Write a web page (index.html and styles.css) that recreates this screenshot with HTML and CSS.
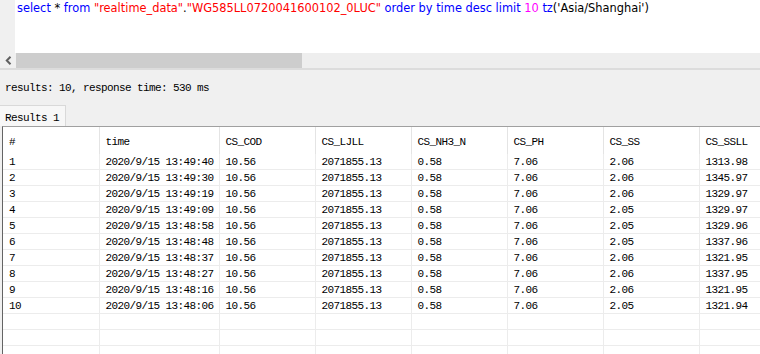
FILE: index.html
```html
<!DOCTYPE html>
<html lang="en">
<head>
    <meta charset="UTF-8">
    <title>Query Results</title>
    <link rel="stylesheet" href="styles.css">
</head>
<body>

    <!-- Query editor -->
    <div class="editor">
        <div class="gutter"></div>
        <div class="code"><span class="kw">select</span> * <span class="kw">from</span> <span class="str">"realtime_data"</span>.<span class="str">"WG585LL0720041600102_0LUC"</span> <span class="kw">order by time desc limit</span> <span class="num">10</span> <span class="kw">tz</span>('Asia/Shanghai')</div>
    </div>
    <div class="hscroll">
        <div class="arrow">
            <svg width="7" height="9" viewBox="0 0 7 9"><path d="M5.5 0.8 L1.8 4.5 L5.5 8.2" fill="none" stroke="#606060" stroke-width="2"/></svg>
        </div>
        <div class="track"><div class="thumb"></div></div>
    </div>

    <!-- Status -->
    <div class="status">results: 10, response time: 530 ms</div>

    <!-- Tabs -->
    <div class="tabs">
        <div class="tab">Results 1</div>
    </div>

    <!-- Result grid -->
    <div class="grid">
        <table>
            <colgroup>
                <col class="c-n"><col class="c-time"><col><col><col><col><col><col>
            </colgroup>
            <thead>
                <tr><th>#</th><th>time</th><th>CS_COD</th><th>CS_LJLL</th><th>CS_NH3_N</th><th>CS_PH</th><th>CS_SS</th><th>CS_SSLL</th></tr>
            </thead>
            <tbody id="rows"></tbody>
        </table>
    </div>

    <script>
        const data = [
            ["1", "2020/9/15 13:49:40", "2.06", "1313.98"],
            ["2", "2020/9/15 13:49:30", "2.06", "1345.97"],
            ["3", "2020/9/15 13:49:19", "2.06", "1329.97"],
            ["4", "2020/9/15 13:49:09", "2.05", "1329.97"],
            ["5", "2020/9/15 13:48:58", "2.05", "1329.96"],
            ["6", "2020/9/15 13:48:48", "2.05", "1337.96"],
            ["7", "2020/9/15 13:48:37", "2.06", "1321.95"],
            ["8", "2020/9/15 13:48:27", "2.06", "1337.95"],
            ["9", "2020/9/15 13:48:16", "2.06", "1321.95"],
            ["10", "2020/9/15 13:48:06", "2.05", "1321.94"]
        ];

        const tbody = document.getElementById("rows");
        data.forEach(function (r) {
            const cells = [r[0], r[1], "10.56", "2071855.13", "0.58", "7.06", r[2], r[3]];
            const tr = document.createElement("tr");
            tr.innerHTML = cells.map(c => "<td>" + c + "</td>").join("");
            tbody.appendChild(tr);
        });

        // empty filler rows
        for (let i = 0; i < 3; i++) {
            const tr = document.createElement("tr");
            tr.innerHTML = "<td></td>".repeat(8);
            tbody.appendChild(tr);
        }
    </script>
</body>
</html>
```

FILE: styles.css
```css
body {
    margin: 0;
    padding: 0;
    background-color: #f0f0f0;
    height: 354px;
    overflow: hidden;
    font-family: "Liberation Mono", monospace;
    font-size: 11px;
    letter-spacing: -0.6px;
    color: #000;
}
.editor {
    display: flex;
    height: 53px;
}
.gutter {
    width: 15px;
    background-color: #f0f0f0;
}
.code {
    flex: 1;
    background: #fff;
    padding: 1px 2px;
    font-family: "DejaVu Sans", Verdana, sans-serif;
    font-size: 11.4px;
    letter-spacing: 0;
    line-height: 14px;
    white-space: nowrap;
}
.kw {
    color: #0000ff;
}
.str {
    color: #ff0000;
}
.num {
    color: #ff00ff;
}
.hscroll {
    display: flex;
    height: 15px;
    border-bottom: 2px solid #dcdcdc;
}
.arrow {
    width: 16px;
    display: flex;
    align-items: center;
    justify-content: center;
    background: #f0f0f0;
}
.track {
    flex: 1;
    background: #eeeeee;
}
.thumb {
    width: 286px;
    height: 100%;
    background: #cdcdcd;
}
.status {
    height: 35px;
    padding: 12px 0 0 5px;
    box-sizing: border-box;
    line-height: 12px;
}
.tabs {
    display: flex;
    height: 21px;
}
.tab {
    width: 66px;
    box-sizing: border-box;
    padding: 6px 0 0 5px;
    line-height: 12px;
    background: #f7f7f7;
    border-top: 1px solid #d9d9d9;
    border-right: 1px solid #d9d9d9;
}
.grid {
    margin-left: 2px;
    background: #fff;
    border-top: 1px solid #a0a0a0;
    border-left: 1px solid #646464;
    height: 230px;
    overflow: hidden;
}
table {
    border-collapse: collapse;
    table-layout: fixed;
    width: 792px;
}
col {
    width: 96px;
}
col.c-n {
    width: 96px;
}
col.c-time {
    width: 120px;
}
th, td {
    text-align: left;
    font-weight: normal;
    padding: 0 0 0 6px;
    white-space: nowrap;
    overflow: hidden;
    border-right: 1px solid #ececec;
}
th {
    height: 27px;
    padding-top: 2px;
    box-sizing: border-box;
    border-right-color: #e4e4e4;
}
td {
    height: 13px;
    line-height: 13px;
    padding-top: 2px;
    border-bottom: 1px solid #ececec;
}
```
